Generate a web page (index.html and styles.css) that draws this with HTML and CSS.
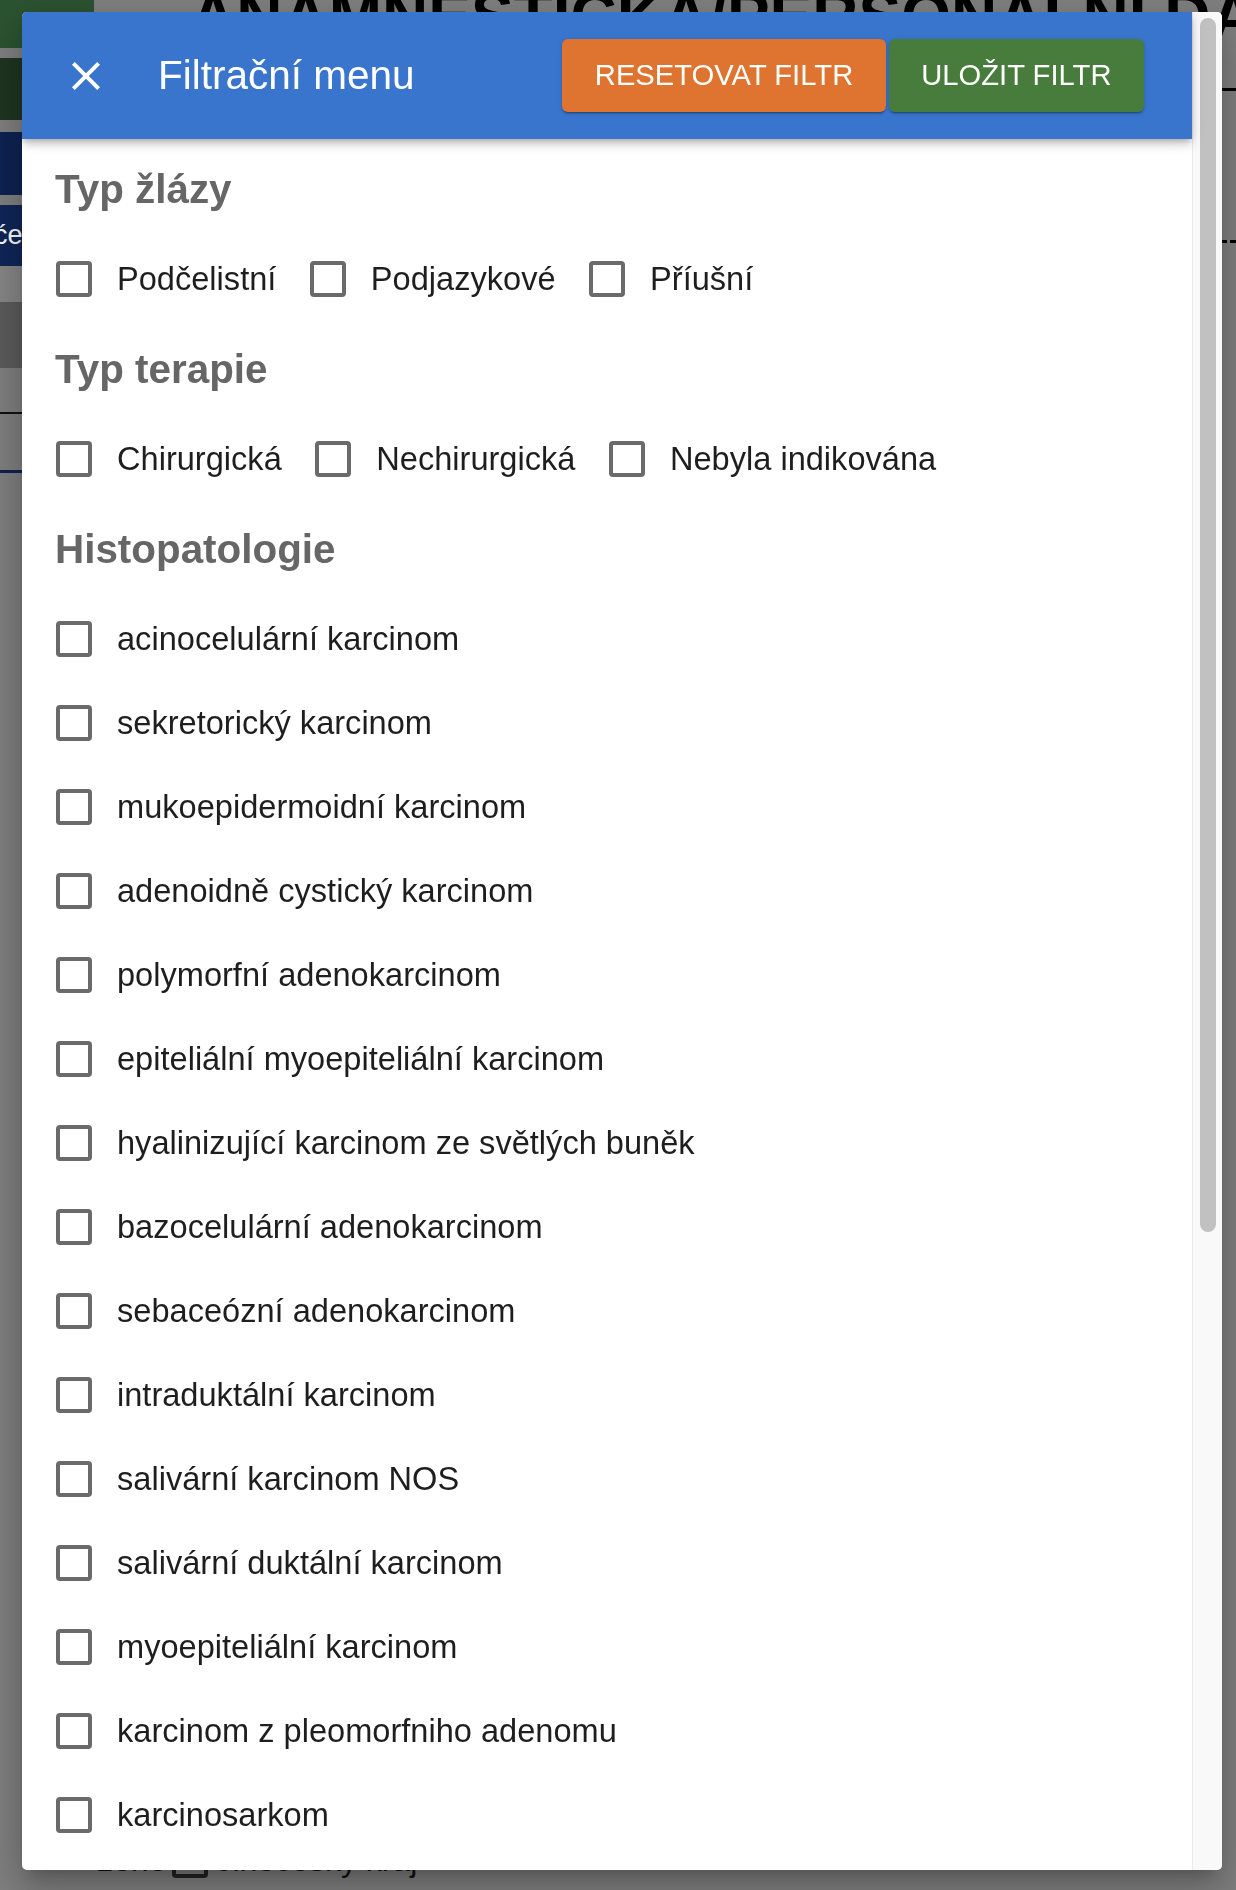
FILE: index.html
```html
<!DOCTYPE html>
<html lang="cs">
<head>
<meta charset="utf-8">
<title>Filtrační menu</title>
<link rel="stylesheet" href="styles.css">
</head>
<body>
<div class="page">
  <nav class="bg-nav">
    <div class="nav-green"></div>
    <div class="nav-dkgreen"></div>
    <div class="nav-navy"></div>
    <div class="nav-navy2"><span class="nav-text">će</span></div>
    <div class="nav-light"></div>
    <div class="nav-dark"></div>
    <div class="nav-line-black"></div>
    <div class="nav-line-navy"></div>
  </nav>
  <main class="bg-main">
    <h1 class="bg-title">ANAMNESTICKÁ/PERSONÁLNÍ DATA</h1>
    <div class="bg-rule"></div>
    <div class="bg-dash"></div>
    <div class="bg-row">
      <span class="bg-text">ženě</span>
      <span class="bg-box"></span>
      <span class="bg-text">Jihočeský kraj</span>
    </div>
  </main>
</div>

<div class="dialog">
  <div class="panel">
    <header class="header">
      <svg class="close" viewBox="0 0 24 24" aria-label="Zavřít"><path fill="#fff" d="M19 6.41L17.59 5 12 10.59 6.41 5 5 6.41 10.59 12 5 17.59 6.41 19 12 13.41 17.59 19 19 17.59 13.41 12z"/></svg>
      <h2 class="title">Filtrační menu</h2>
      <button class="btn btn-reset">Resetovat filtr</button>
      <button class="btn btn-save">Uložit filtr</button>
    </header>
    <div class="content">
      <h3 class="section-title">Typ žlázy</h3>
      <div class="check-row">
        <label class="check"><span class="box"></span><span class="label">Podčelistní</span></label>
        <label class="check"><span class="box"></span><span class="label">Podjazykové</span></label>
        <label class="check"><span class="box"></span><span class="label">Příušní</span></label>
      </div>
      <h3 class="section-title">Typ terapie</h3>
      <div class="check-row">
        <label class="check"><span class="box"></span><span class="label">Chirurgická</span></label>
        <label class="check"><span class="box"></span><span class="label">Nechirurgická</span></label>
        <label class="check"><span class="box"></span><span class="label">Nebyla indikována</span></label>
      </div>
      <h3 class="section-title">Histopatologie</h3>
      <div class="check-list">
        <label class="check"><span class="box"></span><span class="label">acinocelulární karcinom</span></label>
        <label class="check"><span class="box"></span><span class="label">sekretorický karcinom</span></label>
        <label class="check"><span class="box"></span><span class="label">mukoepidermoidní karcinom</span></label>
        <label class="check"><span class="box"></span><span class="label">adenoidně cystický karcinom</span></label>
        <label class="check"><span class="box"></span><span class="label">polymorfní adenokarcinom</span></label>
        <label class="check"><span class="box"></span><span class="label">epiteliální myoepiteliální karcinom</span></label>
        <label class="check"><span class="box"></span><span class="label">hyalinizující karcinom ze světlých buněk</span></label>
        <label class="check"><span class="box"></span><span class="label">bazocelulární adenokarcinom</span></label>
        <label class="check"><span class="box"></span><span class="label">sebaceózní adenokarcinom</span></label>
        <label class="check"><span class="box"></span><span class="label">intraduktální karcinom</span></label>
        <label class="check"><span class="box"></span><span class="label">salivární karcinom NOS</span></label>
        <label class="check"><span class="box"></span><span class="label">salivární duktální karcinom</span></label>
        <label class="check"><span class="box"></span><span class="label">myoepiteliální karcinom</span></label>
        <label class="check"><span class="box"></span><span class="label">karcinom z pleomorfniho adenomu</span></label>
        <label class="check"><span class="box"></span><span class="label">karcinosarkom</span></label>
        <label class="check"><span class="box"></span><span class="label">špatně diferencovaný karcinom</span></label>
        <label class="check"><span class="box"></span><span class="label">lymfoepiteliální karcinom</span></label>
      </div>
    </div>
  </div>
  <div class="scrollbar"><div class="thumb"></div></div>
</div>
</body>
</html>
```

FILE: styles.css
```css
html, body {
  margin: 0;
  padding: 0;
}
body {
  width: 1236px;
  height: 1890px;
  overflow: hidden;
  background: #808080;
  font-family: "Liberation Sans", Arial, sans-serif;
}

.page {
  display: flex;
  height: 1890px;
}
.bg-nav {
  width: 94px;
  flex: none;
  display: flex;
  flex-direction: column;
}
.nav-green {
  height: 48px;
  background: #2c5331;
}
.nav-dkgreen {
  margin-top: 10px;
  height: 62px;
  background: #1f3521;
}
.nav-navy {
  margin-top: 12px;
  height: 63px;
  background: #0e2253;
}
.nav-navy2 {
  margin-top: 10px;
  height: 61px;
  background: #102659;
  line-height: 61px;
  font-size: 27px;
  color: #fff;
  overflow: hidden;
  white-space: nowrap;
}
.nav-text {
  display: inline-block;
  margin-left: -6px;
}
.nav-light {
  height: 36px;
  background: #878787;
}
.nav-dark {
  height: 66px;
  background: #5c5c5c;
}
.nav-line-black {
  margin-top: 44px;
  height: 2px;
  background: #111;
}
.nav-line-navy {
  margin-top: 56px;
  height: 3px;
  background: #0e2253;
}
.bg-main {
  flex: 1;
  display: flex;
  flex-direction: column;
  min-width: 0;
}
.bg-title {
  margin: -16px 0 0 0;
  padding-left: 96px;
  height: 64px;
  font-size: 64px;
  line-height: 64px;
  font-weight: 700;
  color: #000;
  white-space: nowrap;
}
.bg-rule {
  margin-top: 40px;
  height: 3px;
  background: #000;
}
.bg-dash {
  margin-top: 149px;
  border-top: 3px dashed #000;
}
.bg-row {
  margin-top: 1599px;
  height: 36px;
  display: flex;
  align-items: center;
  padding-left: 3px;
}
.bg-text {
  font-size: 32px;
  color: #111;
  white-space: nowrap;
}
.bg-box {
  width: 36px;
  height: 36px;
  box-sizing: border-box;
  border: 4px solid #222;
  border-radius: 4px;
  margin: 0 8px 0 6px;
}

/* ---------- dialog ---------- */
.dialog {
  position: fixed;
  left: 22px;
  top: 12px;
  width: 1200px;
  height: 1858px;
  display: flex;
  background: #fff;
  border-radius: 5px;
  overflow: hidden;
  box-shadow: 0 11px 15px -7px rgba(0,0,0,.2), 0 24px 38px 3px rgba(0,0,0,.14), 0 9px 46px 8px rgba(0,0,0,.12);
}
.panel {
  flex: 1;
  min-width: 0;
  display: flex;
  flex-direction: column;
}
.header {
  flex: none;
  height: 127px;
  box-sizing: border-box;
  background: #3975cc;
  display: flex;
  align-items: center;
  padding: 0 48px 0 40px;
  position: relative;
  z-index: 1;
  box-shadow: 0 3px 6px -2px rgba(0,0,0,.22), 0 6px 8px rgba(0,0,0,.12), 0 2px 16px rgba(0,0,0,.1);
}
.close {
  width: 48px;
  height: 48px;
  flex: none;
  display: block;
}
.title {
  flex: 1;
  margin: 0 0 0 48px;
  font-size: 40.5px;
  font-weight: 400;
  color: #fff;
  white-space: nowrap;
}
.btn {
  flex: none;
  height: 73px;
  padding: 0 32.5px;
  border: 0;
  border-radius: 6px;
  color: #fff;
  font-family: "Liberation Sans", Arial, sans-serif;
  font-size: 29.2px;
  line-height: 73px;
  text-transform: uppercase;
  white-space: nowrap;
  box-shadow: 0 3px 1px -2px rgba(0,0,0,.2), 0 2px 2px 0 rgba(0,0,0,.14), 0 1px 5px 0 rgba(0,0,0,.12);
}
.btn-reset {
  background: #de7430;
}
.btn-save {
  background: #477c3d;
  margin-left: 3px;
}

.content {
  flex: 1;
  overflow: hidden;
  padding: 2px 0 0 34px;
}
.section-title {
  margin: 0;
  height: 96px;
  line-height: 96px;
  font-size: 40.4px;
  font-weight: 700;
  color: #666;
  text-indent: -1px;
}
.check-row {
  display: flex;
  height: 84px;
  align-items: center;
}
.check {
  display: flex;
  align-items: center;
  margin-right: 33.5px;
}
.check-list .check {
  height: 84px;
  margin-right: 0;
}
.box {
  width: 36px;
  height: 36px;
  flex: none;
  box-sizing: border-box;
  border: 4px solid #6a6a6a;
  border-radius: 4px;
  margin-right: 25px;
}
.label {
  font-size: 32.6px;
  color: #1e1e1e;
  white-space: nowrap;
}

.scrollbar {
  width: 30px;
  flex: none;
  box-sizing: border-box;
  background: #f9f9f9;
  border-left: 1px solid #ebebeb;
  padding: 6px 6px 0 7px;
}
.thumb {
  height: 1214px;
  background: #c1c1c1;
  border-radius: 8px;
}
```
